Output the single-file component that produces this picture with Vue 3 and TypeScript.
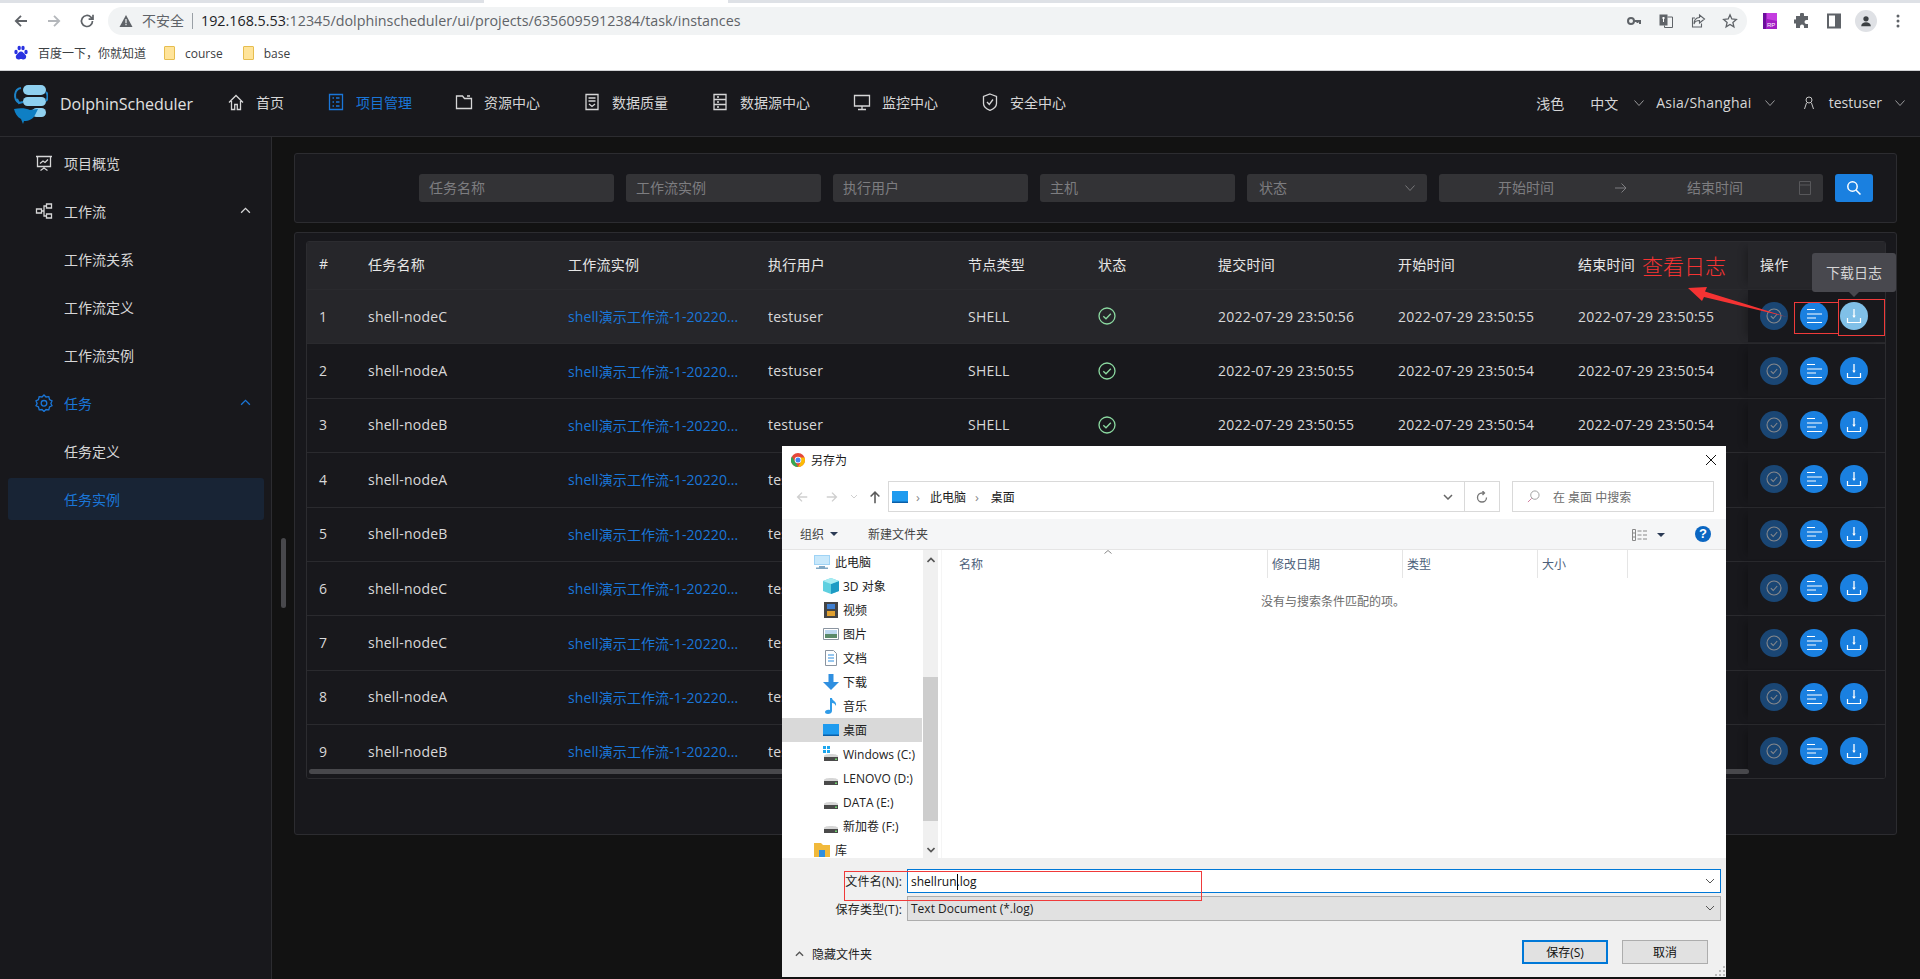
<script setup lang="ts">
interface NavItem { label: string; active?: boolean; d: string }
const navItems: NavItem[] = [
  { label: '首页', d: 'M2 9.5 9 2.5l7 7M4.5 8v8.5h3.2v-5h2.6v5h3.2V8' },
  { label: '项目管理', active: true, d: 'M2.5 1.5h13v15h-13zM5.5 5h1.5M9 5h3.5M5.5 9h1.5M9 9h3.5M5.5 13h1.5M9 13h3.5' },
  { label: '资源中心', d: 'M1.5 3h6l2 2.5h7v10h-15zM12 3h3' },
  { label: '数据质量', d: 'M3 1.5h12v15H3zM5.5 5h7M5.5 8h7M6 11l3 2.5 3-2.5' },
  { label: '数据源中心', d: 'M3 1.5h12v15H3zM3 6.5h12M3 11.5h12M6 4h2M6 9h2M6 14h2' },
  { label: '监控中心', d: 'M1.5 2.5h15v10.5h-15zM9 13v3M5 16.5h8' },
]
const sideTop = ['工作流关系', '工作流定义', '工作流实例']
interface Row { name: string; submit?: string; start?: string; end?: string; full: boolean }
const t = (s: number) => `2022-07-29 23:50:${s}`
const rows: Row[] = [
  { name: 'shell-nodeC', submit: t(56), start: t(55), end: t(55), full: true },
  { name: 'shell-nodeA', submit: t(55), start: t(54), end: t(54), full: true },
  { name: 'shell-nodeB', submit: t(55), start: t(54), end: t(54), full: true },
  { name: 'shell-nodeA', full: false },
  { name: 'shell-nodeB', full: false },
  { name: 'shell-nodeC', full: false },
  { name: 'shell-nodeC', full: false },
  { name: 'shell-nodeA', full: false },
  { name: 'shell-nodeB', full: false },
]
const heads = ['#', '任务名称', '工作流实例', '执行用户', '节点类型', '状态', '提交时间', '开始时间', '结束时间', '操作']
const placeholders = ['任务名称', '工作流实例', '执行用户', '主机']
const drives = ['Windows (C:)', 'LENOVO (D:)', 'DATA (E:)', '新加卷 (F:)']
</script>

<template>
  <div class="page">
    <div class="tabstrip"><div class="tab"></div></div>
    <div class="toolbar">
      <svg class="ti" viewBox="0 0 16 16"><path d="M14 8H3M8 2.8 2.8 8 8 13.2" fill="none" stroke="#5f6368" stroke-width="1.8"/></svg>
      <svg class="ti" viewBox="0 0 16 16"><path d="M2 8h11M8 2.8 13.2 8 8 13.2" fill="none" stroke="#b4b7bb" stroke-width="1.8"/></svg>
      <svg class="ti" viewBox="0 0 16 16"><path d="M13.5 8a5.5 5.5 0 1 1-1.6-3.9L14 6M14 1.8V6.2H9.6" fill="none" stroke="#5f6368" stroke-width="1.7"/></svg>
      <div class="urlbar">
        <svg class="warn" viewBox="0 0 14 14"><path d="M7 1 13.5 13H.5z" fill="#5f6368"/><path d="M6.4 5h1.2v4.2H6.4zM6.4 10h1.2v1.3H6.4z" fill="#f1f3f4"/></svg>
        <span class="insecure">不安全</span>
        <span class="sep"></span>
        <span class="url"><b>192.168.5.53</b>:12345/dolphinscheduler/ui/projects/6356095912384/task/instances</span>
        <span class="urlicons">
          <svg class="ti" viewBox="0 0 16 16"><circle cx="5" cy="8" r="3" fill="none" stroke="#5f6368" stroke-width="2"/><path d="M8 8h6v3M11.500 8v2" fill="none" stroke="#5f6368" stroke-width="2"/></svg>
          <svg class="ti" viewBox="0 0 16 16"><path d="M1.500 1.500h8v11h-8z" fill="#5f6368"/><path d="M9.500 4h5v10.500h-8v-2" fill="none" stroke="#5f6368"/><path d="M4 5h3M5.500 4v5" stroke="#fff"/></svg>
          <svg class="ti" viewBox="0 0 16 16"><path d="M9.500 2 14.500 6 9.500 10V7.500C6 7.500 4.500 9 4 11 4 7.500 6 4.700 9.500 4.500zM11.500 10.500v3.500h-9V5H5" fill="none" stroke="#5f6368" stroke-width="1.100"/></svg>
          <svg class="ti" viewBox="0 0 16 16"><path d="M8 1.800 9.800 6l4.500.4-3.400 3 1 4.400L8 11.500 4.100 13.800l1-4.400-3.400-3L6.200 6z" fill="none" stroke="#5f6368" stroke-width="1.300"/></svg>
        </span>
      </div>
      <div class="exticons">
        <svg class="ti" viewBox="0 0 16 16"><path d="M1 0h14v16H1z" fill="#a21ec4"/><path d="M1 0h3v16H1z" fill="#6b0f9c"/><path d="M5 0h10v8L5 6z" fill="#c43de0"/><text x="5" y="14" font-size="6" fill="#fff" font-family="Liberation Sans">RP</text></svg>
        <svg class="ti" viewBox="0 0 16 16"><path d="M6 1.500a2 2 0 0 1 4 0V3h4v4h-1.500a2 2 0 0 0 0 4H14v4h-4v-1.500a2 2 0 0 0-4 0V15H2v-4.500H.5a2 2 0 0 1 0-4H2V3h4z" fill="#5f6368"/></svg>
        <svg class="ti" viewBox="0 0 16 16"><path d="M2 1.500h12v13H2z" fill="none" stroke="#5f6368" stroke-width="2"/><path d="M9 1.500h5v13H9z" fill="#5f6368"/></svg>
        <span class="avatar"><svg viewBox="0 0 16 16" width="14" height="14"><circle cx="8" cy="5.500" r="3" fill="#3c4043"/><path d="M2.500 14c0-3 2.500-4.500 5.500-4.500s5.500 1.500 5.500 4.500z" fill="#3c4043"/></svg></span>
        <svg class="ti" viewBox="0 0 16 16"><circle cx="8" cy="3" r="1.500" fill="#5f6368"/><circle cx="8" cy="8" r="1.500" fill="#5f6368"/><circle cx="8" cy="13" r="1.500" fill="#5f6368"/></svg>
      </div>
    </div>
    <div class="bookmarks">
      <svg class="ti" viewBox="0 0 16 16"><g fill="#2932e1"><ellipse cx="3" cy="7" rx="1.700" ry="2.200"/><ellipse cx="6.200" cy="3" rx="1.700" ry="2.300"/><ellipse cx="10" cy="3" rx="1.700" ry="2.300"/><ellipse cx="13" cy="7" rx="1.700" ry="2.200"/><path d="M8 6.500c2 0 3 2 4.500 3.500s.5 4.500-2 4.500c-1 0-1.500-.5-2.500-.5s-1.500.5-2.500.5c-2.500 0-3.500-3-2-4.500S6 6.500 8 6.500z"/></g></svg>
      <span class="bm-text baidu">百度一下，你就知道</span>
      <i class="folder"></i><span class="bm-text">course</span>
      <i class="folder second"></i><span class="bm-text">base</span>
    </div>

    <header class="header">
      <svg class="logo" viewBox="0 0 36 40">
        <rect x="11" y="1" width="23" height="10" rx="5" fill="#8fd0ef"/>
        <rect x="11" y="13" width="23" height="9" rx="4.500" fill="#8fd0ef"/>
        <rect x="20" y="24" width="14" height="9" rx="4.500" fill="#8fd0ef"/>
        <path d="M9 4C2 5 1 15 7 19M5 15l2 4 4-1" fill="none" stroke="#1d83c8" stroke-width="2"/>
        <path d="M34 8c2 2 2 7 0 9" fill="none" stroke="#1d83c8" stroke-width="2"/>
        <path d="M2 25c6-1.500 12-1 16 1l8-1-3 6c-2 4-6 6-11 6l-1 3-2-5C5 33 3 29 2 25z" fill="#0f7fc4"/>
      </svg>
      <span class="brand">DolphinScheduler</span>
      <nav class="nav">
        <div v-for="n in navItems" :key="n.label" class="nav-item" :class="{ on: n.active }">
          <svg class="nav-ico" viewBox="0 0 18 18"><path :d="n.d" fill="none" stroke="currentColor" stroke-width="1.300"/></svg>
          <span>{{ n.label }}</span>
        </div>
        <div class="nav-item">
          <svg class="nav-ico" viewBox="0 0 18 18"><path d="M9 1 15.500 3.500v7c0 3-3 5.500-6.500 6.800-3.500-1.300-6.500-3.800-6.500-6.800v-7zM6 9l2.300 2.500L12 6.500" fill="none" stroke="currentColor" stroke-width="1.300"/></svg>
          <span>安全中心</span>
        </div>
      </nav>
      <div class="hright">
        <span class="light">浅色</span>
        <span>中文</span>
        <svg class="chev first" viewBox="0 0 10 6"><path d="M.5.500 5 5.500 9.500.500" fill="none" stroke="currentColor"/></svg>
        <span class="tz">Asia/Shanghai</span>
        <svg class="chev" viewBox="0 0 10 6"><path d="M.5.500 5 5.500 9.500.500" fill="none" stroke="currentColor"/></svg>
        <svg class="user" viewBox="0 0 12 14"><circle cx="6" cy="4" r="3" fill="none" stroke="currentColor"/><path d="M3.500 7 1.500 13M8.500 7l2 6" fill="none" stroke="currentColor"/></svg>
        <span class="uname">testuser</span>
        <svg class="chev" viewBox="0 0 10 6"><path d="M.5.500 5 5.500 9.500.500" fill="none" stroke="currentColor"/></svg>
      </div>
    </header>

    <div class="body">
      <aside class="side">
        <div class="side-item">
          <svg class="side-ico" viewBox="0 0 18 18"><path d="M1 2.500h16M2.500 2.500v10h13v-10M9 12.500V14M5.500 16.500 9 14l3.500 2.500M5 9.500 8 7l2 1.500 3-3" fill="none" stroke="currentColor" stroke-width="1.300"/></svg>
          <span>项目概览</span>
        </div>
        <div class="side-item">
          <svg class="side-ico" viewBox="0 0 18 18"><path d="M1.500 7h5v4h-5zM11.500 2h5v4h-5zM11.500 12h5v4h-5zM6.500 9H9V4h2.500M9 9v5h2.500" fill="none" stroke="currentColor" stroke-width="1.300"/></svg>
          <span>工作流</span>
          <svg class="up" viewBox="0 0 12 8"><path d="M1 6.500 6 1.500l5 5" fill="none" stroke="currentColor" stroke-width="1.500"/></svg>
        </div>
        <div v-for="s in sideTop" :key="s" class="side-item sub">{{ s }}</div>
        <div class="side-item blue">
          <svg class="side-ico" viewBox="0 0 18 18"><path d="M9 1l2 2 2.800-.3.700 2.800 2.500 1.300L15.900 9.500l1.100 2.200-2.500 1.300-.7 2.800L11 15.500l-2 2-2-2-2.800.3-.7-2.800L1 11.700l1.100-2.200L1 6.800l2.500-1.300.7-2.800L7 3z" fill="none" stroke="currentColor" stroke-width="1.300"/><circle cx="9" cy="9.300" r="2.800" fill="none" stroke="currentColor" stroke-width="1.300"/></svg>
          <span>任务</span>
          <svg class="up" viewBox="0 0 12 8"><path d="M1 6.500 6 1.500l5 5" fill="none" stroke="currentColor" stroke-width="1.500"/></svg>
        </div>
        <div class="side-item sub">任务定义</div>
        <div class="side-item sub blue selected">任务实例</div>
      </aside>
      <main class="main">
        <section class="card filter">
          <div v-for="p in placeholders" :key="p" class="field">{{ p }}</div>
          <div class="field select">
            <span>状态</span>
            <svg class="sel-chev" viewBox="0 0 10 6"><path d="M.5.500 5 5.500 9.500.500" fill="none" stroke="currentColor"/></svg>
          </div>
          <div class="field date">
            <span class="d1">开始时间</span>
            <svg class="darrow" viewBox="0 0 14 12"><path d="M1 6h11M7.500 1.500 12 6l-4.500 4.500" fill="none" stroke="currentColor"/></svg>
            <span class="d2">结束时间</span>
            <svg class="dcal" viewBox="0 0 14 16"><path d="M1.500 1.500h11v13h-11zM1.500 5h11" fill="none" stroke="currentColor"/></svg>
          </div>
          <button class="search" type="button">
            <svg viewBox="0 0 16 16" width="16" height="16"><circle cx="6.500" cy="6.500" r="4.700" fill="none" stroke="#fff" stroke-width="1.500"/><path d="M10 10l4.500 4.500" stroke="#fff" stroke-width="1.500"/></svg>
          </button>
        </section>
        <section class="card tablecard">
          <div class="table">
            <div class="tr thead">
              <div v-for="(h, i) in heads" :key="h" class="td" :class="{ fixed: i === 9 }">{{ h }}</div>
            </div>
            <div v-for="(r, i) in rows" :key="i" class="tr row" :class="{ hover: i === 0 }">
              <div class="td">{{ i + 1 }}</div>
              <div class="td">{{ r.name }}</div>
              <div class="td link">shell演示工作流-1-20220...</div>
              <div class="td">testuser</div>
              <div class="td"><template v-if="r.full">SHELL</template></div>
              <div class="td">
                <svg v-if="r.full" class="ok" viewBox="0 0 18 18"><circle cx="9" cy="9" r="8" fill="none" stroke="currentColor" stroke-width="1.300"/><path d="M5.300 9.200 8 11.800l4.800-5" fill="none" stroke="currentColor" stroke-width="1.300"/></svg>
              </div>
              <div class="td">{{ r.submit }}</div>
              <div class="td">{{ r.start }}</div>
              <div class="td">{{ r.end }}</div>
              <div class="td fixed ops">
                <span class="op dis"><svg viewBox="0 0 16 16" width="16" height="16"><circle cx="8" cy="8" r="7" fill="none" stroke="#86888c" stroke-width="1.100"/><path d="M4.800 8.200 7.200 10.500l4-4.500" fill="none" stroke="#86888c" stroke-width="1.100"/></svg></span>
                <span class="op"><svg viewBox="0 0 16 16" width="16" height="16"><path d="M1 1.500h8M1 6h15M1 10h9M1 14.500h15" stroke="#fff" stroke-width="1.200"/></svg></span>
                <span class="op" :class="{ lit: i === 0 }"><svg viewBox="0 0 16 16" width="16" height="16"><path d="M8 1v8" stroke="#fff" stroke-width="1.300"/><path d="M6.300 7.500 8 10 9.700 7.500z" fill="#fff"/><path d="M1.500 10v4.500h13V10" fill="none" stroke="#fff" stroke-width="1.200"/></svg></span>
              </div>
            </div>
            <div class="hbar"></div>
          </div>
        </section>
      </main>
    </div>
    <div class="vbar"></div>

    <div class="tooltip">下载日志</div>
    <div class="note">查看日志</div>
    <svg class="red-arrow" viewBox="0 0 120 50" width="120" height="50"><path d="M8 8 27 7 25 11.500 107 37 24 17 22 21z" fill="#f53333"/></svg>
    <div class="redbox rb1"></div>
    <div class="redbox rb2"></div>

    <div class="dialog">
      <div class="dlg-title">
        <svg class="chrome" viewBox="0 0 14 14"><circle cx="7" cy="7" r="7" fill="#e5483a"/><path d="M7 14A7 7 0 0 1 .9 3.500L4 8.500z" fill="#34a853"/><path d="M7 14a7 7 0 0 0 6.500-9.500H7l3 4z" fill="#fbbc05"/><circle cx="7" cy="7" r="3.300" fill="#fff"/><circle cx="7" cy="7" r="2.500" fill="#4285f4"/></svg>
        <span>另存为</span>
        <svg class="close" viewBox="0 0 10 10"><path d="M0 0l10 10M10 0 0 10" stroke="#111" stroke-width="1"/></svg>
      </div>
      <div class="dlg-addr">
        <svg class="a-ico" viewBox="0 0 16 16"><path d="M14 8H3M8 3 3 8l5 5" fill="none" stroke="#cfcfcf" stroke-width="1.600"/></svg>
        <svg class="a-ico" viewBox="0 0 16 16"><path d="M2 8h11M8 3l5 5-5 5" fill="none" stroke="#cfcfcf" stroke-width="1.600"/></svg>
        <svg class="a-mini" viewBox="0 0 8 6"><path d="M1 1l3 3 3-3" fill="none" stroke="#cfcfcf"/></svg>
        <svg class="a-ico up-arrow" viewBox="0 0 16 16"><path d="M8 15V3M3 7.500 8 2.500l5 5" fill="none" stroke="#5b5b5b" stroke-width="1.800"/></svg>
        <div class="addr">
          <svg class="pc" viewBox="0 0 16 12"><path d="M0 0h16v12H0z" fill="#1e9bef"/><path d="M0 10.500h16V12H0z" fill="#0a5fa8"/></svg>
          <i class="crumb tight">›</i><span>此电脑</span><i class="crumb">›</i><span>桌面</span>
          <svg class="addr-chev" viewBox="0 0 10 6"><path d="M1 1l4 4 4-4" fill="none" stroke="#666" stroke-width="1.500"/></svg>
          <span class="refresh"><svg viewBox="0 0 12 12" width="12" height="12"><path d="M10.500 6.500A4.500 4.500 0 1 1 6 2h2M6.500 0 8.500 2 6.500 4" fill="none" stroke="#777" stroke-width="1.300"/></svg></span>
        </div>
        <div class="dsearch">
          <svg viewBox="0 0 14 14" width="13" height="13"><circle cx="8.500" cy="5.500" r="4.500" fill="none" stroke="#999"/><path d="M5 9 1 13" stroke="#c79"/></svg>
          <span>在 桌面 中搜索</span>
        </div>
      </div>
      <div class="dlg-tools">
        <span>组织</span>
        <i class="caret"></i>
        <span class="newf">新建文件夹</span>
        <svg class="views" viewBox="0 0 16 12"><path d="M.5.500h3v11h-3zM.5 4h3M.5 8h3M5.500 2h4M5.500 6h4M5.500 10h4M11 2h4M11 6h4M11 10h4" fill="none" stroke="#888"/></svg>
        <i class="caret c2"></i>
        <span class="help">?</span>
      </div>
      <div class="dlg-main">
        <div class="dnav">
          <div class="dn l1"><svg viewBox="0 0 16 14" width="16" height="14"><path d="M0 0h16v10H0z" fill="#9fd3f5"/><path d="M1 1h14v8H1z" fill="#c8e8fb"/><path d="M5 11h6v1.500H5zM2 12.500h12V14H2z" fill="#7fa7c4"/></svg>此电脑</div>
          <div class="dn"><svg viewBox="0 0 16 16" width="16" height="16"><path d="M8 0l8 3v10l-8 3-8-3V3z" fill="#5fd0e0"/><path d="M8 6v10l8-3V3z" fill="#1e9bc4"/><path d="M8 0l8 3-8 3-8-3z" fill="#a8ecf2"/></svg>3D 对象</div>
          <div class="dn"><svg viewBox="0 0 16 16" width="16" height="16"><path d="M1 0h14v16H1z" fill="#444"/><path d="M4 2h8v5H4z" fill="#3f7fd0"/><path d="M4 9h8v5H4z" fill="#e0a030"/></svg>视频</div>
          <div class="dn"><svg viewBox="0 0 16 12" width="16" height="12"><path d="M.5.500h15v11H.5z" fill="#fff" stroke="#8a94a0"/><path d="M2 2h12v4H2z" fill="#bcd8f0"/><path d="M2 6h12v4H2z" fill="#5a8a6a"/></svg>图片</div>
          <div class="dn"><svg viewBox="0 0 12 16" width="16" height="16"><path d="M.5.500h8l3 3v12H.5z" fill="#fff" stroke="#8a94a0"/><path d="M3 5h6M3 8h6M3 11h6" stroke="#2f8fe0"/></svg>文档</div>
          <div class="dn"><svg viewBox="0 0 16 16" width="16" height="16"><path d="M5.500 0h5v8H16l-8 8-8-8h5.500z" fill="#2f8fe0"/></svg>下载</div>
          <div class="dn"><svg viewBox="0 0 16 16" width="16" height="16"><path d="M7 0h2c0 3 5 3 4 8-1-2-2-3-4-3v8c0 2-2 3-4 3s-3-1-3-2 2-3 5-2z" fill="#2f9be8"/></svg>音乐</div>
          <div class="dn sel"><svg viewBox="0 0 16 12" width="16" height="12"><path d="M0 0h16v12H0z" fill="#1e9bef"/><path d="M0 10.500h16V12H0z" fill="#0a5fa8"/></svg>桌面</div>
          <div v-for="(dr, i) in drives" :key="dr" class="dn">
            <svg viewBox="0 0 16 16" width="16" height="16"><path v-if="i === 0" d="M0 0h3v3H0zM4 0h3v3H4zM0 4h3v3H0zM4 4h3v3H4z" fill="#1ea7ef"/><path d="M1 10c0-1 2-2 7-2s7 1 7 2v1H1z" fill="#d6d6d6"/><path d="M1 11h14v4H1z" fill="#4a4a4a"/><path d="M12 12.500h2V14h-2z" fill="#6fd06f"/></svg>
            {{ dr }}
          </div>
          <div class="dn l1"><svg viewBox="0 0 16 14" width="16" height="14"><path d="M0 0h7l2 2h7v12H0z" fill="#f1b93b"/><path d="M5 7h6v7H5z" fill="#2f8fe0"/></svg>库</div>
        </div>
        <div class="dscroll">
          <svg class="sc-up" viewBox="0 0 8 6"><path d="M.5 5 4 1.500 7.500 5" fill="none" stroke="#555" stroke-width="1.600"/></svg>
          <div class="thumb"></div>
          <svg class="sc-dn" viewBox="0 0 8 6"><path d="M.5 1 4 4.500 7.500 1" fill="none" stroke="#555" stroke-width="1.600"/></svg>
        </div>
        <div class="dcontent">
          <div class="dhead">
            <span class="c-name">名称<svg class="sort" viewBox="0 0 8 4"><path d="M.5 3.500 4 .5l3.500 3" fill="none" stroke="#888"/></svg></span>
            <span class="c-date">修改日期</span>
            <span class="c-type">类型</span>
            <span class="c-size">大小</span>
          </div>
          <div class="empty">没有与搜索条件匹配的项。</div>
        </div>
      </div>
      <div class="dlg-foot">
        <div class="frow">
          <label>文件名(N):</label>
          <div class="fname">
            <span>shellrun<i class="cursor"></i>.log</span>
            <svg class="f-chev" viewBox="0 0 10 6"><path d="M1 1l4 4 4-4" fill="none" stroke="#555"/></svg>
          </div>
        </div>
        <div class="frow r2">
          <label>保存类型(T):</label>
          <div class="ftype">
            <span>Text Document (*.log)</span>
            <svg class="f-chev" viewBox="0 0 10 6"><path d="M1 1l4 4 4-4" fill="none" stroke="#555"/></svg>
          </div>
        </div>
        <div class="factions">
          <span class="hide"><svg viewBox="0 0 10 6" width="9" height="6"><path d="M1 5l4-4 4 4" fill="none" stroke="#555" stroke-width="1.500"/></svg>隐藏文件夹</span>
          <button class="win primary" type="button">保存(S)</button>
          <button class="win" type="button">取消</button>
        </div>
        <svg class="grip" viewBox="0 0 10 10"><path d="M8 0h2v2H8zM4 4h2v2H4zM8 4h2v2H8zM0 8h2v2H0zM4 8h2v2H4zM8 8h2v2H8z" fill="#bbb"/></svg>
      </div>
    </div>
    <div class="redbox rb3"></div>
  </div>
</template>

<style>
html, body { margin: 0; background: #121212; }
</style>

<style scoped>
.page {
  position: relative; width: 1920px; height: 979px; overflow: hidden;
  display: flex; flex-direction: column; background: #121212;
  font-family: "Open Sans", "Noto Sans CJK SC", sans-serif; font-size: 14px;
}
svg { display: block; flex: none; }
.tabstrip { height: 3px; background: #dee1e6; position: relative; }
.tab { position: absolute; left: 484px; width: 244px; top: 0; height: 3px; background: #fff; }
.toolbar { height: 33px; background: #fff; display: flex; align-items: center; padding-left: 13px; gap: 17px; box-sizing: border-box; padding-top: 2px; }
.ti { width: 16px; height: 16px; }
.urlbar {
  margin-left: -4px; width: 1639px; height: 28px; border-radius: 14px; background: #f1f3f4;
  display: flex; align-items: center; box-sizing: border-box; padding: 0 9px 0 11px;
}
.warn { width: 14px; height: 14px; }
.insecure { margin-left: 9px; color: #5f6368; line-height: 28px; }
.sep { width: 1px; height: 16px; background: #9aa0a6; margin: 0 8px; }
.url { color: #5f6368; font-size: 14.3px; }
.url b { font-weight: 400; color: #202124; }
.urlicons { margin-left: auto; display: flex; gap: 16px; }
.exticons { display: flex; align-items: center; gap: 16px; margin-left: -2px; }
.avatar { width: 22px; height: 22px; margin: 0 -3px; border-radius: 50%; background: #dfe1e5; display: flex; align-items: center; justify-content: center; }
.bookmarks { height: 35px; background: #fff; border-bottom: 1px solid #d0d1d3; box-sizing: border-box; display: flex; align-items: center; padding-left: 13px; font-size: 12px; color: #3c4043; }
.bm-text { margin-left: 10px; }
.baidu { margin-left: 9px; margin-right: 18px; }
.folder { width: 11px; height: 14px; background: #ffe49a; border: 1px solid #e6bd4f; border-radius: 1px; box-sizing: border-box; }
.second { margin-left: 20px; }

.header {
  height: 66px; background: #18181c; border-bottom: 1px solid #2c2c30; box-sizing: border-box;
  display: flex; align-items: center; color: #d8d8d8; position: relative; padding-left: 12px;
}
.logo { width: 36px; height: 40px; }
.brand { margin-left: 12px; font-size: 16px; font-family: "Open Sans", sans-serif; color: #e0e0e0; width: 135px; white-space: nowrap; }
.nav { display: flex; gap: 43px; margin-left: 32px; padding-bottom: 3px; }
.nav-item { display: flex; align-items: center; gap: 11px; white-space: nowrap; color: #d6d6d7; }
.nav-item.on { color: #1a76d8; }
.nav-ico { width: 18px; height: 18px; }
.hright { margin-left: auto; display: flex; align-items: center; color: #d6d6d7; padding-right: 15px; padding-bottom: 2px; }
.light { margin-right: 26px; }
.chev { width: 10px; height: 6px; margin-left: 13px; color: #9a9a9c; }
.chev.first { margin-left: 16px; }
.tz { margin-left: 12px; letter-spacing: .26px; }
.user { width: 12px; height: 14px; margin-left: 28px; color: #c8c8c8; }
.uname { margin-left: 14px; }

.body { flex: 1; display: flex; min-height: 0; }
.side { width: 272px; box-sizing: border-box; background: #18181c; border-right: 1px solid #2c2c30; padding: 5px 7px 0 8px; display: flex; flex-direction: column; gap: 6px; color: #d6d6d7; }
.side-item { height: 42px; border-radius: 3px; display: flex; align-items: center; position: relative; padding-left: 27px; flex: none; }
.side-item.sub { padding-left: 56px; }
.side-ico { width: 18px; height: 18px; margin-right: 11px; }
.up { width: 11px; height: 7px; position: absolute; right: 13px; top: 17px; }
.blue { color: #1a76d8; }
.selected { background: #182435; }
.main { flex: 1; padding: 16px 23px 0 22px; display: flex; flex-direction: column; gap: 9px; min-width: 0; }
.card { border: 1px solid #2c2c30; border-radius: 3px; background: #18181c; box-sizing: border-box; }
.filter { height: 70px; display: flex; align-items: center; justify-content: flex-end; gap: 12px; padding-right: 23px; flex: none; }
.field { width: 195px; height: 28px; line-height: 28px; background: #333336; border-radius: 3px; color: #7d7d80; padding-left: 10px; box-sizing: border-box; flex: none; }
.select { width: 180px; padding-left: 12px; display: flex; align-items: center; justify-content: space-between; padding-right: 12px; }
.sel-chev { width: 10px; height: 6px; color: #77777a; }
.date { width: 384px; padding-left: 0; display: flex; align-items: center; text-align: center; }
.d1 { width: 174px; }
.darrow { width: 14px; height: 12px; margin: 0 1px; }
.d2 { width: 168px; padding-left: 4px; box-sizing: border-box; }
.dcal { width: 14px; height: 16px; margin-left: 1px; color: #58585b; }
.search { width: 38px; height: 28px; border: 0; padding: 0; border-radius: 3px; background: #1a80e0; display: flex; align-items: center; justify-content: center; }
.tablecard { height: 603px; padding: 8px 10px 0 11px; flex: none; }
.table { position: relative; border: 1px solid #2c2c30; border-radius: 3px; box-sizing: border-box; height: 538px; width: 1580px; overflow: hidden; }
.tr { display: grid; grid-template-columns: 49px 200px 200px 200px 130px 120px 180px 180px 182px 138px; align-items: stretch; color: #d8d8d9; }
.td { padding-left: 12px; display: flex; align-items: center; white-space: nowrap; overflow: hidden; letter-spacing: .22px; }
.thead { height: 47px; background: #26262a; color: #e6e6e6; }
.thead .td { padding-bottom: 4px; box-sizing: border-box; }
.row { height: 54.4px; border-top: 1px solid #2a2a2e; box-sizing: border-box; background: #18181c; padding-bottom: 1px; }
.row.hover { background: #26262a; }
.fixed { box-shadow: -8px 0 8px -6px rgba(0, 0, 0, .28); background: #18181c; }
.thead .fixed { background: #26262a; }
.ops { gap: 12px; }
.link { color: #1a76d8; letter-spacing: .1px; }
.ok { width: 18px; height: 18px; color: #8bd9a0; }
.op { width: 28px; height: 28px; border-radius: 50%; background: #1a80e0; display: flex; align-items: center; justify-content: center; flex: none; }
.op.dis { background: #1a4674; }
.op.lit { background: #80c0e8; }
.hbar { position: absolute; left: 2px; bottom: 4px; width: 1440px; height: 5px; border-radius: 3px; background: #48484c; }
.vbar { position: absolute; left: 281px; top: 538px; width: 5px; height: 70px; border-radius: 3px; background: #48484c; }

.tooltip { position: absolute; left: 1812px; top: 253px; width: 84px; height: 39px; border-radius: 3px; background: #48484e; color: #d6d6d7; display: flex; align-items: center; justify-content: center; padding-bottom: 2px; box-sizing: border-box; }
.tooltip::after { content: ""; position: absolute; left: 36px; bottom: -5px; width: 0; height: 0; border: 6px solid transparent; border-bottom: 0; border-top-color: #48484e; }
.note { position: absolute; left: 1642px; top: 249px; font-size: 21px; line-height: 32px; color: #f53333; white-space: nowrap; font-family: "Noto Sans CJK SC", sans-serif; font-weight: 300; }
.red-arrow { position: absolute; left: 1680px; top: 280px; }
.redbox { position: absolute; border: 1px solid #f03a3a; box-sizing: border-box; }
.rb1 { left: 1794px; top: 302px; width: 45px; height: 32px; border-right: 0; }
.rb2 { left: 1838px; top: 299px; width: 47px; height: 37px; }
.rb3 { left: 844px; top: 871px; width: 358px; height: 30px; }

.dialog { position: absolute; left: 782px; top: 446px; width: 944px; height: 531px; background: #fff; display: flex; flex-direction: column; font-size: 12px; color: #1a1a1a; }
.dlg-title { height: 35px; display: flex; align-items: center; padding: 0 0 7px 9px; gap: 6px; position: relative; flex: none; box-sizing: border-box; }
.chrome { width: 14px; height: 14px; }
.close { width: 10px; height: 10px; position: absolute; right: 10px; top: 9px; }
.dlg-addr { height: 38px; flex: none; display: flex; align-items: flex-start; padding-left: 13px; box-sizing: border-box; }
.a-ico { width: 14px; height: 14px; margin: 9px 16px 0 0; }
.a-mini { width: 8px; height: 6px; margin: 13px 10px 0 -5px; }
.up-arrow { width: 14px; margin-right: 6px; }
.addr { width: 612px; height: 31px; box-sizing: border-box; border: 1px solid #d9d9d9; display: flex; align-items: center; padding-left: 3px; position: relative; flex: none; }
.pc { width: 16px; height: 12px; }
.crumb { font-style: normal; color: #888; margin: 0 12px 0 9px; font-size: 13px; }
.crumb.tight { margin: 0 10px 0 8px; }
.addr-chev { width: 10px; height: 6px; position: absolute; right: 46px; top: 12px; }
.refresh { position: absolute; right: 0; top: 0; width: 34px; height: 29px; border-left: 1px solid #d9d9d9; display: flex; align-items: center; justify-content: center; }
.dsearch { width: 202px; height: 31px; margin-left: 12px; box-sizing: border-box; border: 1px solid #d9d9d9; display: flex; align-items: center; padding-left: 14px; gap: 13px; color: #6d6d6d; flex: none; }
.dlg-tools { height: 31px; flex: none; background: #f5f6f7; border-bottom: 1px solid #e5e5e5; box-sizing: border-box; display: flex; align-items: center; padding-left: 18px; position: relative; color: #444; }
.caret { width: 0; height: 0; border: 4px solid transparent; border-bottom: 0; border-top: 4px solid #2b3a55; margin-left: 6px; }
.newf { margin-left: 30px; }
.views { width: 16px; height: 12px; position: absolute; right: 78px; top: 10px; }
.c2 { position: absolute; right: 61px; top: 14px; }
.help { position: absolute; right: 15px; top: 7px; width: 16px; height: 16px; border-radius: 50%; background: #0a66c2; color: #fff; text-align: center; line-height: 16px; font-weight: 700; font-family: "Liberation Sans", sans-serif; font-size: 13px; }
.dlg-main { height: 308px; flex: none; display: flex; }
.dnav { width: 140px; overflow: hidden; flex: none; color: #222; }
.dn { height: 24px; display: flex; align-items: center; gap: 4px; padding-left: 41px; white-space: nowrap; box-sizing: border-box; }
.dn.l1 { padding-left: 32px; gap: 5px; }
.dn.sel { background: #d9d9d9; }
.dscroll { width: 15px; margin-left: 1px; background: #f0f0f0; position: relative; flex: none; }
.thumb { position: absolute; top: 127px; left: 0; width: 15px; height: 144px; background: #cdcdcd; }
.sc-up, .sc-dn { position: absolute; left: 4px; width: 8px; height: 6px; }
.sc-up { top: 7px; }
.sc-dn { bottom: 5px; }
.dcontent { flex: 1; margin-left: 3px; border-left: 1px solid #f5f5f5; }
.dhead { display: flex; height: 28px; align-items: center; color: #4c607a; }
.dhead span { height: 100%; display: flex; align-items: center; padding-left: 4px; box-sizing: border-box; border-right: 1px solid #e5e5e5; position: relative; }
.c-name { width: 326px; padding-left: 17px !important; }
.c-date { width: 135px; }
.c-type { width: 135px; }
.c-size { width: 90px; }
.sort { width: 8px; height: 4px; position: absolute; left: 162px; top: 0; }
.empty { text-align: center; color: #6d6d6d; margin-top: 14px; width: 782px; }
.dlg-foot { flex: 1; background: #f0f0f0; position: relative; padding-top: 11px; box-sizing: border-box; color: #222; }
.frow { display: grid; grid-template-columns: 120px 814px; column-gap: 5px; align-items: center; height: 24px; }
.frow.r2 { margin-top: 3px; height: 25px; }
.frow label { text-align: right; white-space: nowrap; letter-spacing: .2px; }
.fname, .ftype { height: 100%; box-sizing: border-box; display: flex; align-items: center; padding-left: 3px; position: relative; }
.fname { background: #fff; border: 1px solid #0078d7; color: #111; }
.ftype { background: #e1e1e1; border: 1px solid #adadad; }
.cursor { display: inline-block; width: 1px; height: 16px; background: #000; vertical-align: -4px; margin-right: -1px; }
.f-chev { width: 10px; height: 6px; position: absolute; right: 5px; top: 8px; }
.factions { display: flex; align-items: flex-start; margin-top: 19px; position: relative; padding-left: 740px; gap: 14px; }
.hide { position: absolute; left: 13px; top: 5px; display: flex; align-items: center; gap: 8px; }
.win { width: 86px; height: 24px; padding: 0; background: #e1e1e1; border: 1px solid #adadad; font: inherit; color: #111; }
.win.primary { border: 2px solid #0078d7; }
.grip { width: 10px; height: 10px; position: absolute; right: 1px; bottom: 1px; }
</style>
